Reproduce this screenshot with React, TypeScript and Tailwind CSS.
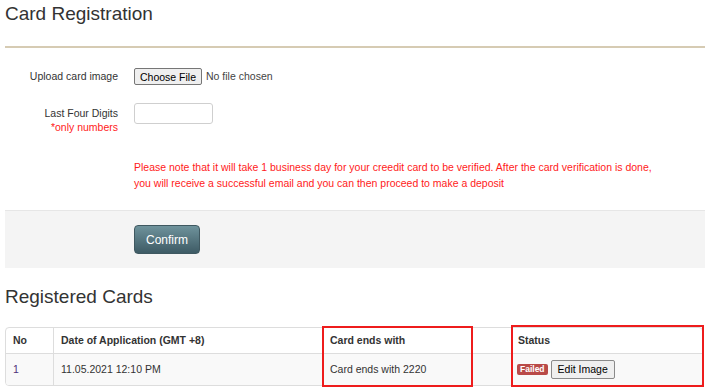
import React, { FC } from "react";

const FormRow: FC<{ label: React.ReactNode; children: React.ReactNode; className?: string }> = ({
  label,
  children,
  className = "",
}) => (
  <div className={`flex gap-[16px] ${className}`}>
    <div className="w-[113px] shrink-0 text-right">{label}</div>
    <div className="flex items-center">{children}</div>
  </div>
);

const App: FC = () => {
  return (
    <div className="w-[710px] h-[392px] overflow-hidden bg-white px-[5px] font-['Liberation_Sans',Arial,sans-serif] text-[10.5px] text-[#333]">
      <h1 className="pt-[3px] text-[19px] leading-[22px] text-[#333]">Card Registration</h1>
      <div className="mt-[21px] h-[2px] bg-[#d6cbb3]" />

      <FormRow className="mt-[20px] h-[17px] items-center" label="Upload card image">
        <button className="h-[17px] rounded-[2px] border border-[#767676] bg-[#efefef] px-[5px] text-[10.5px] leading-[14px] text-black">
          Choose File
        </button>
        <span className="ml-[4px] text-[#444]">No file chosen</span>
      </FormRow>

      <FormRow className="mt-[18px] items-start" label={
        <div className="mt-[3px] leading-[14px]">
          <div>Last Four Digits</div>
          <div className="text-[#ff1a1a]">*only numbers</div>
        </div>
      }>
        <input className="h-[21px] w-[79px] rounded-[3px] border border-[#cfcfcf] bg-white" />
      </FormRow>

      <p className="ml-[129px] mt-[25px] leading-[16px] text-[#ff1a1a]">
        Please note that it will take 1 business day for your creedit card to be verified. After the card verification is done,
        <br />
        you will receive a successful email and you can then proceed to make a deposit
      </p>

      <div className="mt-[19px] h-[58px] border-t border-[#e6e6e6] bg-[#f4f4f4] pl-[129px] pt-[14px]">
        <button className="h-[29px] w-[66px] rounded-[4px] border border-[#3f5860] bg-gradient-to-b from-[#6f939c] to-[#3e5b65] text-[12px] text-white">
          Confirm
        </button>
      </div>

      <h2 className="mt-[18px] text-[19px] leading-[22px] text-[#333]">Registered Cards</h2>

      <div className="relative mt-[19px] w-[698px]">
        <div className="grid grid-cols-[47px_269px_189px_1fr] overflow-hidden rounded-[4px] border border-[#dddddd]">
          <div className="flex h-[26px] items-center border-b border-[#dddddd] px-[7px] font-bold">No</div>
          <div className="flex h-[26px] items-center border-b border-l border-[#dddddd] px-[7px] font-bold">
            Date of Application (GMT +8)
          </div>
          <div className="flex h-[26px] items-center border-b border-l border-[#dddddd] px-[7px] font-bold">
            Card ends with
          </div>
          <div className="flex h-[26px] items-center border-b border-l border-[#dddddd] px-[6px] font-bold">Status</div>

          <div className="flex h-[31px] items-center bg-[#f9f9f9] px-[7px] text-[#4e2f78]">1</div>
          <div className="flex h-[31px] items-center border-l border-[#dddddd] bg-[#f9f9f9] px-[7px]">
            11.05.2021 12:10 PM
          </div>
          <div className="flex h-[31px] items-center border-l border-[#dddddd] bg-[#f9f9f9] px-[7px]">
            Card ends with 2220
          </div>
          <div className="flex h-[31px] items-center gap-[3px] border-l border-[#dddddd] bg-[#f9f9f9] px-[5px]">
            <span className="rounded-[2px] bg-[#b94a48] px-[3px] text-[8.5px] font-bold leading-[11px] text-white">
              Failed
            </span>
            <button className="h-[19px] rounded-[2px] border border-[#8a8a8a] bg-[#efefef] px-[6px] text-[10.5px] text-black">
              Edit Image
            </button>
          </div>
        </div>

        <div className="absolute left-[317px] top-[-1px] h-[61px] w-[151px] border-2 border-[#ee1c1c]" />
        <div className="absolute left-[506px] top-[-2px] h-[62px] w-[193px] border-2 border-[#ee1c1c]" />
      </div>
    </div>
  );
};

export default App;
